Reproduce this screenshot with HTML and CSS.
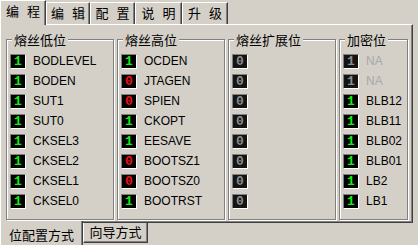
FILE: index.html
```html
<!doctype html>
<html lang="zh">
<head>
	<meta charset="UTF-8">
	<title>熔丝位配置</title>
	<link rel="stylesheet" href="styles.css">
</head>
<body>

	<div class="window">

		<div class="tabbar">
			<div class="tab active t1">编 程</div>
			<div class="tab t2">编 辑</div>
			<div class="tab t3">配 置</div>
			<div class="tab t4">说 明</div>
			<div class="tab t5">升 级</div>
		</div>

		<div class="panel">

			<div class="group">
				<div class="groupTitle">熔丝低位</div>
				<div class="rows">
					<div class="row"><span class="led on">1</span><span class="label">BODLEVEL</span></div>
					<div class="row"><span class="led on">1</span><span class="label">BODEN</span></div>
					<div class="row"><span class="led on">1</span><span class="label">SUT1</span></div>
					<div class="row"><span class="led on">1</span><span class="label">SUT0</span></div>
					<div class="row"><span class="led on">1</span><span class="label">CKSEL3</span></div>
					<div class="row"><span class="led on">1</span><span class="label">CKSEL2</span></div>
					<div class="row"><span class="led on">1</span><span class="label">CKSEL1</span></div>
					<div class="row"><span class="led on">1</span><span class="label">CKSEL0</span></div>
				</div>
			</div>

			<div class="group">
				<div class="groupTitle">熔丝高位</div>
				<div class="rows">
					<div class="row"><span class="led on">1</span><span class="label">OCDEN</span></div>
					<div class="row"><span class="led off">0</span><span class="label">JTAGEN</span></div>
					<div class="row"><span class="led off">0</span><span class="label">SPIEN</span></div>
					<div class="row"><span class="led on">1</span><span class="label">CKOPT</span></div>
					<div class="row"><span class="led on">1</span><span class="label">EESAVE</span></div>
					<div class="row"><span class="led off">0</span><span class="label">BOOTSZ1</span></div>
					<div class="row"><span class="led off">0</span><span class="label">BOOTSZ0</span></div>
					<div class="row"><span class="led on">1</span><span class="label">BOOTRST</span></div>
				</div>
			</div>

			<div class="group">
				<div class="groupTitle">熔丝扩展位</div>
				<div class="rows">
					<div class="row"><span class="led dim">0</span></div>
					<div class="row"><span class="led dim">0</span></div>
					<div class="row"><span class="led dim">0</span></div>
					<div class="row"><span class="led dim">0</span></div>
					<div class="row"><span class="led dim">0</span></div>
					<div class="row"><span class="led dim">0</span></div>
					<div class="row"><span class="led dim">0</span></div>
					<div class="row"><span class="led dim">0</span></div>
				</div>
			</div>

			<div class="group narrow">
				<div class="groupTitle">加密位</div>
				<div class="rows">
					<div class="row"><span class="led dim">1</span><span class="label na">NA</span></div>
					<div class="row"><span class="led dim">1</span><span class="label na">NA</span></div>
					<div class="row"><span class="led on">1</span><span class="label">BLB12</span></div>
					<div class="row"><span class="led on">1</span><span class="label">BLB11</span></div>
					<div class="row"><span class="led on">1</span><span class="label">BLB02</span></div>
					<div class="row"><span class="led on">1</span><span class="label">BLB01</span></div>
					<div class="row"><span class="led on">1</span><span class="label">LB2</span></div>
					<div class="row"><span class="led on">1</span><span class="label">LB1</span></div>
				</div>
			</div>

		</div>

		<div class="bottomTabs">
			<div class="btab active">位配置方式</div>
			<div class="btab">向导方式</div>
		</div>

	</div>

</body>
</html>
```

FILE: styles.css
```css
html, body {
	margin: 0px;
	padding: 0px;
	background-color: #d4d0c8;
}
body {
	width: 418px;
	height: 245px;
	overflow: hidden;
	font-family: "Liberation Sans", "Noto Sans CJK SC", sans-serif;
	font-size: 12px;
	color: #000;
}
.window {
	width: 413px;
}

/* top tab strip */
.tabbar {
	display: flex;
	align-items: flex-end;
	height: 24px;
}
.tab {
	box-sizing: border-box;
	height: 22px;
	border-top: 1px solid #fff;
	border-left: 1px solid #fff;
	border-right: 1px solid #404040;
	box-shadow: inset -1px 0 #808080;
	font-family: "Noto Sans CJK SC", sans-serif;
	font-size: 13px;
	line-height: 19px;
	text-align: center;
	word-spacing: 5px;
	background-color: #d4d0c8;
}
.tab.active {
	height: 25px;
	margin-bottom: -1px;
	line-height: 20px;
	z-index: 2;
}
.t1 { width: 46px; }
.t2 { width: 44px; }
.t3 { width: 45px; }
.t4 { width: 47px; }
.t5 { width: 46px; }

/* main panel */
.panel {
	box-sizing: border-box;
	height: 199px;
	border-top: 1px solid #fff;
	border-left: 1px solid #fff;
	border-right: 1px solid #404040;
	border-bottom: 1px solid #404040;
	box-shadow: inset -1px -1px #808080;
	padding: 14px 0 2px 5px;
	display: flex;
	gap: 3px;
}
.group {
	box-sizing: border-box;
	width: 108px;
	border: 1px solid #808080;
	box-shadow: 1px 1px 0 #fff, inset 1px 1px 0 #fff;
	display: flex;
	flex-direction: column;
}
.group.narrow {
	width: 69px;
}
.groupTitle {
	align-self: flex-start;
	margin: -8px 0 0 5px;
	padding: 0 2px;
	background-color: #d4d0c8;
	font-family: "Noto Sans CJK SC", sans-serif;
	font-size: 13px;
	line-height: 15px;
}
.rows {
	padding: 4px 0 0 3px;
}
.row {
	height: 20px;
	display: flex;
	align-items: center;
}
.led {
	box-sizing: border-box;
	width: 16px;
	height: 15px;
	background-color: #000;
	border: 1px solid;
	border-color: #808080 #fff #fff #808080;
	font-family: "Liberation Mono", monospace;
	font-weight: bold;
	font-size: 13px;
	line-height: 13px;
	text-align: center;
}
.led.on { color: #10f010; }
.led.off { color: #f01010; }
.led.dim { color: #8c8c8c; background-color: #141414; }
.label {
	margin-left: 7px;
}
.label.na {
	color: #a8a8a8;
}

/* bottom tab strip */
.bottomTabs {
	display: flex;
	align-items: flex-start;
}
.btab {
	box-sizing: border-box;
	font-family: "Noto Sans CJK SC", sans-serif;
	font-size: 13px;
	text-align: center;
	background-color: #d4d0c8;
}
.btab.active {
	width: 83px;
	height: 26px;
	margin-top: -2px;
	padding-top: 4px;
	line-height: 20px;
	border-left: 1px solid #fff;
	border-right: 1px solid #404040;
	box-shadow: inset -1px 0 #808080;
	z-index: 2;
}
.btab:not(.active) {
	width: 65px;
	height: 20px;
	line-height: 18px;
	border-left: 1px solid #fff;
	border-right: 1px solid #404040;
	border-bottom: 1px solid #404040;
	box-shadow: inset -1px -1px #808080;
}
```
